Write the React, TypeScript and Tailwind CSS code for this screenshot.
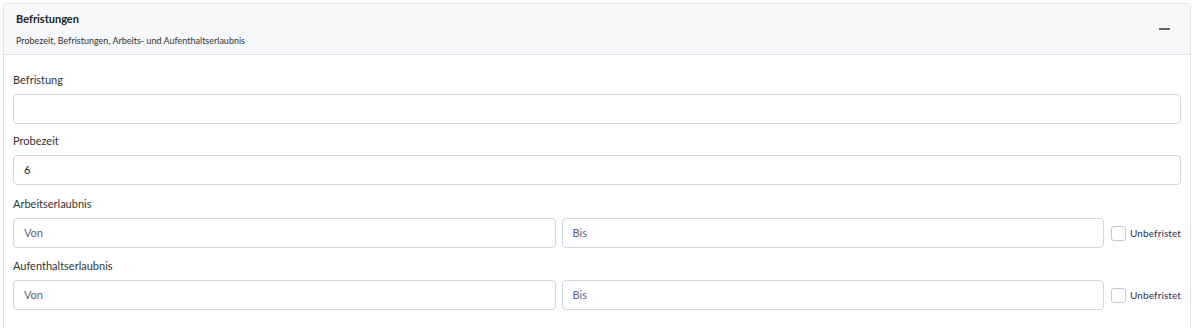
import React from "react";

const font = { fontFamily: 'Lato, "Open Sans", sans-serif' };

function Field({ label, value }: { label: string; value?: string }) {
  return (
    <div>
      <div className="text-[11px] leading-[14px] text-[#333] mb-[7px]">{label}</div>
      <div className="h-[30px] rounded-[4px] border border-[#cfd6e3] bg-white px-[10px] flex items-center text-[11px] text-[#222]">
        {value}
      </div>
    </div>
  );
}

function RangeField({ label, className }: { label: string; className?: string }) {
  return (
    <div className={className}>
      <div className="text-[11px] leading-[14px] text-[#333] mb-[7px]">{label}</div>
      <div className="flex items-center gap-[6px]">
        <div className="flex-1 h-[30px] rounded-[4px] border border-[#cfd6e3] bg-white px-[10px] flex items-center text-[11px] text-[#5b6582]">
          Von
        </div>
        <div className="flex-1 h-[30px] rounded-[4px] border border-[#cfd6e3] bg-white px-[10px] flex items-center text-[11px] text-[#5b6582]">
          Bis
        </div>
        <label className="flex items-center gap-[4px] ml-[1px] shrink-0">
          <span className="w-[15px] h-[15px] rounded-[3px] border border-[#c4cad6] bg-white" />
          <span className="text-[10px] text-[#2f2f4f] tracking-[0.1px]">Unbefristet</span>
        </label>
      </div>
    </div>
  );
}

export default function App() {
  return (
    <div className="bg-white w-[1199px] h-[328px] overflow-hidden pt-[3px] pl-[3px]" style={font}>
      <div className="w-[1188px] rounded-t-[4px] border border-[#e0e4ea] border-b-0 h-[340px]">
        {/* header */}
        <div className="h-[51px] bg-[#f7f8fa] border-b border-[#dde2ea] flex items-start justify-between pl-[12px] pr-[20px]">
          <div>
            <div className="text-[11px] font-bold text-[#222] mt-[8px] leading-[14px]">Befristungen</div>
            <div className="text-[9px] text-[#333] mt-[9px] leading-[12px]">
              Probezeit, Befristungen, Arbeits- und Aufenthaltserlaubnis
            </div>
          </div>
          <div className="mt-[24px] w-[11px] h-[1.5px] bg-[#666]" />
        </div>
        {/* body */}
        <div className="px-[9px] pt-[18px] flex flex-col gap-[10px]">
          <Field label="Befristung" />
          <Field label="Probezeit" value="6" />
          <RangeField label="Arbeitserlaubnis" className="mt-[2px]" />
          <RangeField label="Aufenthaltserlaubnis" className="mt-[1px]" />
        </div>
      </div>
    </div>
  );
}
